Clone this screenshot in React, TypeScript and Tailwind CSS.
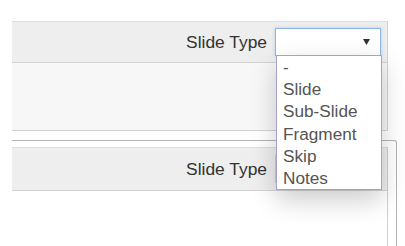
import React from 'react';

const options = ['-', 'Slide', 'Sub-Slide', 'Fragment', 'Skip', 'Notes'];

function Arrow() {
  return (
    <svg width="7" height="6" viewBox="0 0 7 6" className="block">
      <path d="M0 0 L7 0 L3.5 6 Z" fill="#333" />
    </svg>
  );
}

function CellToolbar({ h, focused }: { h: string; focused?: boolean }) {
  return (
    <div className={`flex items-center justify-end pr-[6px] bg-[#eeeeee] border-t border-b border-t-[#dddddd] border-b-[#d3d3d3] ${h}`}>
      <span className="text-[17.4px] text-[#333] mr-[8px]">Slide Type</span>
      <div
        className={`w-[106px] h-[28px] bg-white flex items-center justify-end pr-[10px] border ${
          focused ? 'border-[#8fb6ea] shadow-[0_0_3px_rgba(102,175,233,0.5)]' : 'border-[#cccccc]'
        }`}
      >
        <Arrow />
      </div>
    </div>
  );
}

export default function App() {
  return (
    <div className="relative w-[405px] h-[246px] overflow-hidden bg-white font-['Liberation_Sans',Arial,sans-serif]">
      <div className="pt-[21px] pl-[12px]">
        {/* first cell */}
        <div className="w-[376px] border-r border-b border-[#d2d2d2] rounded-br-[2px]">
          <CellToolbar h="h-[42px] border-t-[#dcdcdc]" focused />
          <div className="h-[67px] bg-[#f7f7f7]" />
        </div>

        {/* second cell, selected */}
        <div className="mt-[9px] w-[385px] h-[120px] border-t border-r border-[#b4b4b4] rounded-tr-[3px] pt-[6px]">
          <div className="w-[376px] h-full border-r border-[#cfcfcf]">
            <CellToolbar h="h-[44px]" />
            <div className="bg-white" />
          </div>
        </div>
      </div>

      {/* open select list */}
      <div className="absolute left-[276px] top-[55px] w-[106px] bg-white border border-[#a7a1d2] shadow-[0_10px_24px_rgba(0,0,0,0.2)]">
        {options.map((o) => (
          <div key={o} className="pl-[6px] text-[17.2px] leading-[22.2px] text-[#555]">
            {o}
          </div>
        ))}
      </div>
    </div>
  );
}
